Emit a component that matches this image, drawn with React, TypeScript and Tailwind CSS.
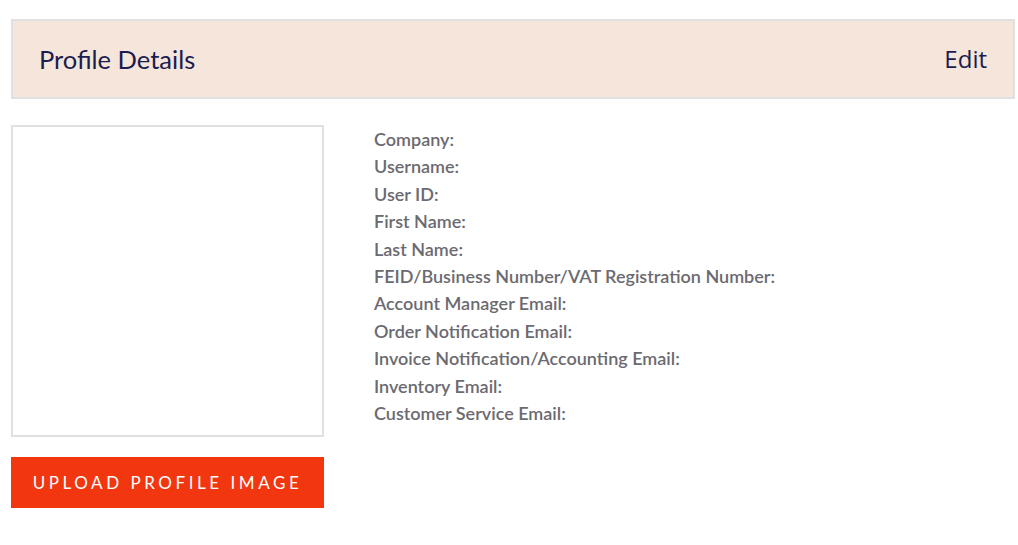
const FIELDS = [
  "Company:",
  "Username:",
  "User ID:",
  "First Name:",
  "Last Name:",
  "FEID/Business Number/VAT Registration Number:",
  "Account Manager Email:",
  "Order Notification Email:",
  "Invoice Notification/Accounting Email:",
  "Inventory Email:",
  "Customer Service Email:",
];

export default function App() {
  return (
    <div className="min-h-screen bg-white pl-[11px] pr-[3px] pt-[19px] font-['Lato',sans-serif]">
      {/* Header */}
      <div className="flex h-[80px] items-center justify-between border-2 border-[#e0e0e0] bg-[#f5e5da] pl-[26px] pr-[26px]">
        <h2 className="text-[25.5px] font-normal text-[#1b1c4f]">Profile Details</h2>
        <button className="font-['Open_Sans',sans-serif] text-[24px] text-[#1b1c4f]">Edit</button>
      </div>

      <div className="mt-[26px] flex gap-[50px]">
        {/* Image + upload */}
        <div className="w-[313px] shrink-0">
          <div className="h-[312px] border-2 border-[#e0e0e0] bg-white" />
          <button className="mt-[20px] flex h-[51px] w-full items-center justify-center bg-[#f2360f] text-[17px] uppercase tracking-[3.55px] text-white">
            Upload Profile Image
          </button>
        </div>

        {/* Details */}
        <ul className="pt-[1px] text-[18px] font-semibold leading-[27.4px] text-[#6b6a70]">
          {FIELDS.map((f) => (
            <li key={f}>{f}</li>
          ))}
        </ul>
      </div>
    </div>
  );
}
